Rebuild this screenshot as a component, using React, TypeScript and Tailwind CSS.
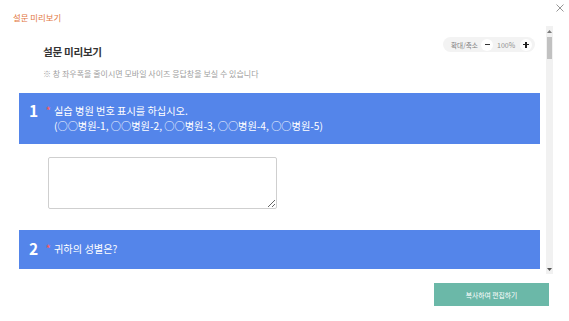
import React from "react";

function Bar({ num, lines, pt, pb }: { num: string; lines: string[]; pt: string; pb: string }) {
  return (
    <div className={`bg-[#5485ea] w-[521px] flex items-start pl-[10px] text-white ${pt} ${pb}`}>
      <div className="w-[17px] text-[15.5px] leading-[15px] font-bold">{num}</div>
      <div className="w-[8px] text-[9px] leading-[15px] text-[#ff5a5a] font-bold">*</div>
      <div className="flex flex-col text-[10.2px] leading-[15px]">
        {lines.map((l, i) => (
          <div key={i} className="whitespace-nowrap">{l}</div>
        ))}
      </div>
    </div>
  );
}

export default function App() {
  return (
    <div className="w-[569px] h-[321px] bg-white relative flex flex-col font-['Noto_Sans_CJK_KR','Noto_Sans',sans-serif] overflow-hidden">
      <div className="h-[26px] pl-[13px] pt-[11px] text-[8.4px] leading-[12px] text-[#e2763e]">설문 미리보기</div>
      <button className="absolute top-[3px] right-[5px] w-[9px] h-[9px] flex items-center justify-center">
        <svg width="8" height="8" viewBox="0 0 8 8">
          <path d="M0.5 0.5 L7.5 7.5 M7.5 0.5 L0.5 7.5" stroke="#8a8a8a" strokeWidth="0.9" fill="none" />
        </svg>
      </button>

      <div className="flex ml-[19px] h-[248px]">
        <div className="w-[527px] h-[248px] overflow-hidden relative">
          <div className="absolute top-[11px] left-[424px] w-[92px] h-[15px] rounded-full bg-[#f3f3f3] flex items-center pl-[8px]">
            <span className="text-[6.6px] leading-[8px] text-[#7d7d7d] w-[27px] whitespace-nowrap">확대/축소</span>
            <span className="ml-[3px] w-[12px] h-[12px] rounded-full bg-white flex items-center justify-center">
              <span className="w-[5px] h-[1.2px] bg-[#333]"></span>
            </span>
            <span className="ml-[4px] w-[18px] text-[7px] leading-[8px] text-[#8f8f8f] whitespace-nowrap">100%</span>
            <span className="ml-[5px] w-[12px] h-[12px] rounded-full bg-white flex items-center justify-center relative">
              <span className="w-[6px] h-[1.3px] bg-[#222]"></span>
              <span className="absolute w-[1.3px] h-[6px] bg-[#222]"></span>
            </span>
          </div>

          <div className="pl-[24px] pt-[19px]">
            <div className="text-[10.6px] leading-[14px] font-bold text-[#333] tracking-[-0.3px]">설문 미리보기</div>
            <div className="mt-[9px] text-[8px] leading-[11px] text-[#a0a0a0] whitespace-nowrap">
              ※ 창 좌우폭을 줄이시면 모바일 사이즈 응답창을 보실 수 있습니다
            </div>
          </div>

          <div className="mt-[14px]">
            <Bar
              num="1"
              pt="pt-[10px]"
              pb="pb-[11px]"
              lines={["실습 병원 번호 표시를 하십시오.", "(○○병원-1, ○○병원-2, ○○병원-3, ○○병원-4, ○○병원-5)"]}
            />
          </div>

          <div className="ml-[29px] mt-[13px] flex">
            <textarea className="w-[229px] h-[52px] border border-[#cfcfcf] rounded-[2px] bg-white outline-none"></textarea>
          </div>

          <div className="mt-[21px]">
            <Bar num="2" pt="pt-[11px]" pb="pb-[13px]" lines={["귀하의 성별은?"]} />
          </div>

          <div className="ml-[29px] mt-[14px] h-[60px]"></div>
        </div>

        <div className="w-[7px] h-[248px] bg-[#f1f1f1] flex flex-col">
          <div className="h-[10px] flex items-center justify-center">
            <svg width="5" height="3" viewBox="0 0 5 3">
              <path d="M2.5 0 L5 3 L0 3 Z" fill="#7a7a7a" />
            </svg>
          </div>
          <div className="mt-[1px] mx-[1px] h-[22px] bg-[#c1c1c1]"></div>
          <div className="flex-1"></div>
          <div className="h-[10px] flex items-center justify-center">
            <svg width="5" height="3" viewBox="0 0 5 3">
              <path d="M0 0 L5 0 L2.5 3 Z" fill="#555" />
            </svg>
          </div>
        </div>
      </div>

      <div className="flex justify-end pr-[20px] pt-[9px]">
        <button className="w-[115px] h-[23px] bg-[#6bb8a8] text-white text-[6.8px] leading-[10px] flex items-center justify-center">
          복사하여 편집하기
        </button>
      </div>
    </div>
  );
}
